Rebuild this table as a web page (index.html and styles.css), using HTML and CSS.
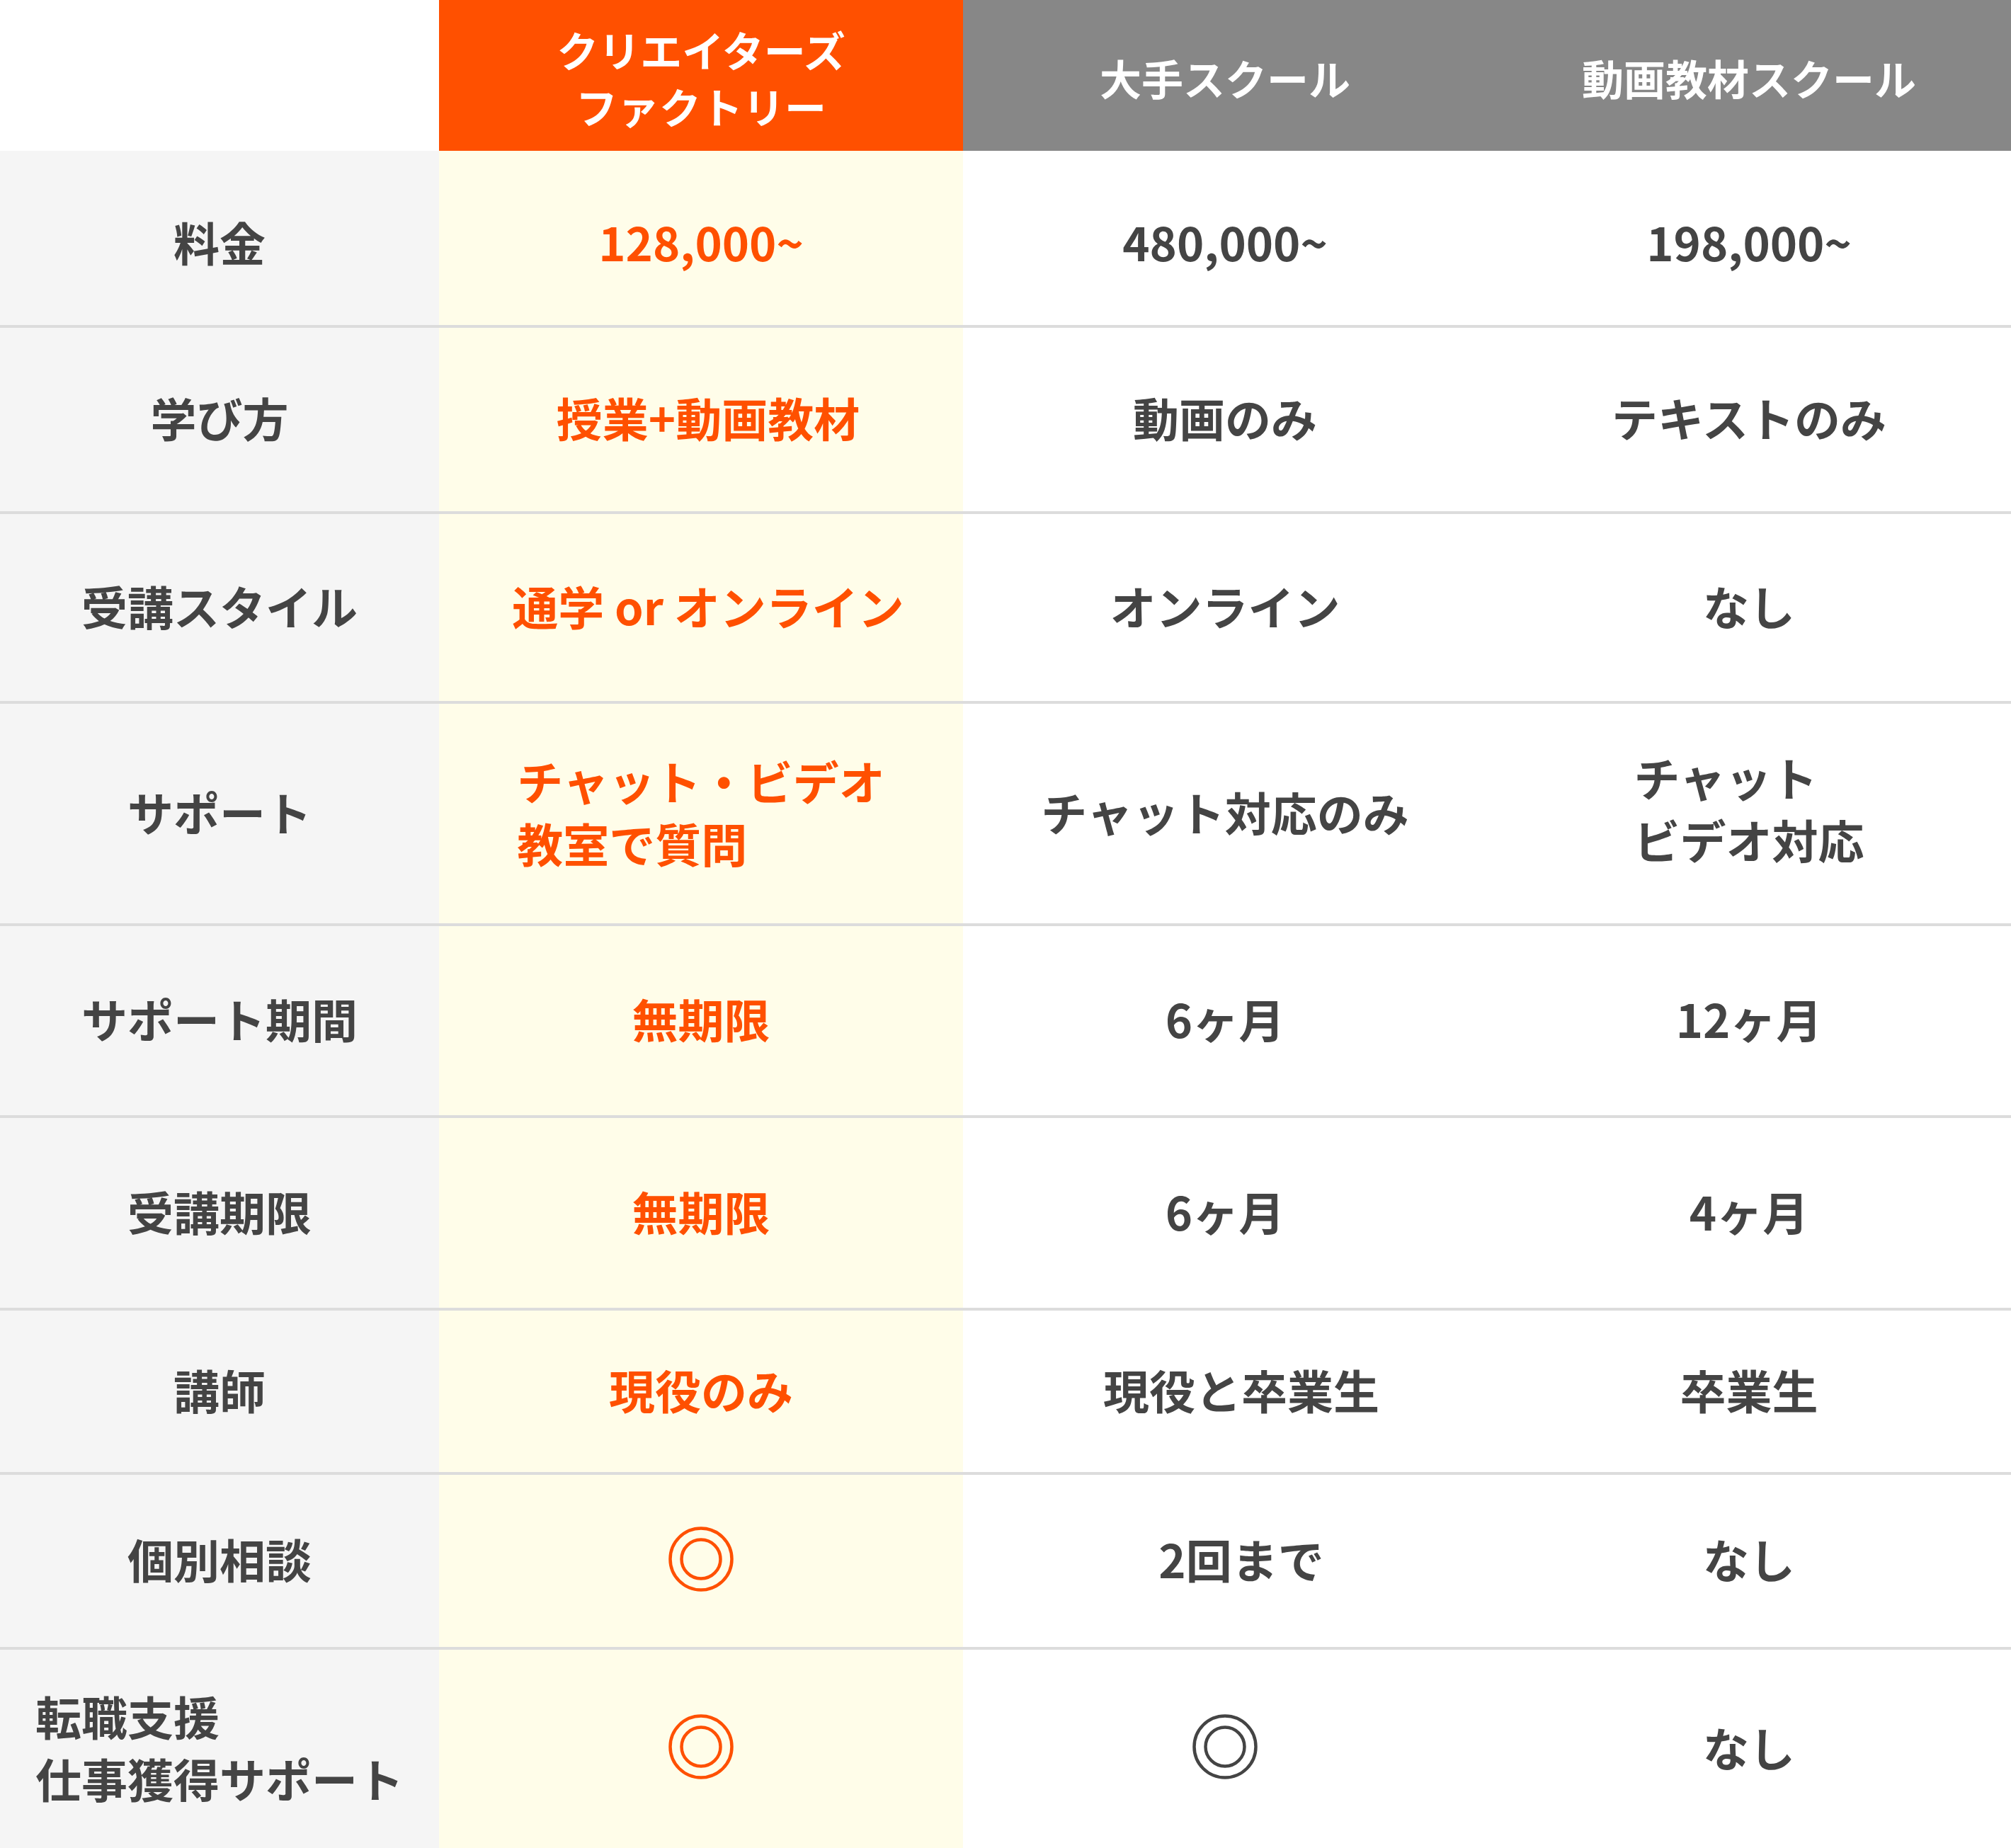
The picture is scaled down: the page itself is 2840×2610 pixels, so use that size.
FILE: index.html
```html
<!DOCTYPE html>
<html lang="ja">
<head>
<meta charset="utf-8">
<title>比較表</title>
<link rel="stylesheet" href="styles.css">
</head>
<body>
<div class="compare">
  <div class="row head">
    <div class="cell c1"></div>
    <div class="cell c2 th-main"><span class="block center">クリエイターズ<br>ファクトリー</span></div>
    <div class="cell c3 th-sub">大手スクール</div>
    <div class="cell c4 th-sub">動画教材スクール</div>
  </div>
  <div class="row r1">
    <div class="cell c1">料金</div>
    <div class="cell c2 hl">128,000~</div>
    <div class="cell c3">480,000~</div>
    <div class="cell c4">198,000~</div>
  </div>
  <div class="row r2">
    <div class="cell c1">学び方</div>
    <div class="cell c2 hl shift-s">授業+動画教材</div>
    <div class="cell c3">動画のみ</div>
    <div class="cell c4">テキストのみ</div>
  </div>
  <div class="row r3">
    <div class="cell c1">受講スタイル</div>
    <div class="cell c2 hl shift-s">通学 or オンライン</div>
    <div class="cell c3">オンライン</div>
    <div class="cell c4">なし</div>
  </div>
  <div class="row r4">
    <div class="cell c1">サポート</div>
    <div class="cell c2 hl"><span class="block">チャット・ビデオ<br>教室で質問</span></div>
    <div class="cell c3">チャット対応のみ</div>
    <div class="cell c4"><span class="block raise">チャット<br>ビデオ対応</span></div>
  </div>
  <div class="row r5">
    <div class="cell c1">サポート期間</div>
    <div class="cell c2 hl">無期限</div>
    <div class="cell c3">6ヶ月</div>
    <div class="cell c4">12ヶ月</div>
  </div>
  <div class="row r6">
    <div class="cell c1">受講期限</div>
    <div class="cell c2 hl">無期限</div>
    <div class="cell c3">6ヶ月</div>
    <div class="cell c4">4ヶ月</div>
  </div>
  <div class="row r7">
    <div class="cell c1">講師</div>
    <div class="cell c2 hl">現役のみ</div>
    <div class="cell c3 shift-l">現役と卒業生</div>
    <div class="cell c4">卒業生</div>
  </div>
  <div class="row r8">
    <div class="cell c1">個別相談</div>
    <div class="cell c2 hl">
      <svg class="dbl" viewBox="0 0 92 92" aria-label="◎"><circle cx="46" cy="46" r="43.5"/><circle cx="46" cy="46" r="27.5"/></svg>
    </div>
    <div class="cell c3 shift-l">2回まで</div>
    <div class="cell c4">なし</div>
  </div>
  <div class="row r9 last">
    <div class="cell c1"><span class="block">転職支援<br>仕事獲得サポート</span></div>
    <div class="cell c2 hl">
      <svg class="dbl" viewBox="0 0 92 92" aria-label="◎"><circle cx="46" cy="46" r="43.5"/><circle cx="46" cy="46" r="27.5"/></svg>
    </div>
    <div class="cell c3">
      <svg class="dbl gray" viewBox="0 0 92 92" aria-label="◎"><circle cx="46" cy="46" r="43.5"/><circle cx="46" cy="46" r="27.5"/></svg>
    </div>
    <div class="cell c4">なし</div>
  </div>
</div>
</body>
</html>
```

FILE: styles.css
```css
html, body {
  margin: 0;
  padding: 0;
  background: #ffffff;
}

body {
  font-family: "Noto Sans CJK JP", "Noto Sans", sans-serif;
  font-weight: 700;
  color: #444444;
  font-size: 65px;
}

.compare {
  width: 2840px;
  display: flex;
  flex-direction: column;
}

.row {
  display: grid;
  grid-template-columns: 620px 740px 740px 740px;
}

.cell {
  display: flex;
  align-items: center;
  justify-content: center;
  box-sizing: border-box;
  border-bottom: 4px solid #dcdcdc;
  line-height: 1.36;
  white-space: nowrap;
  padding-bottom: 6px;
}

.c1 { background: #f5f5f5; }
.c2 { background: #fffde9; }
.c3, .c4 { background: #ffffff; }

.hl { color: #ff5000; }

.block {
  display: block;
  text-align: left;
}
.block.center { text-align: center; }
.block.raise { margin-bottom: 10px; }

.head { height: 213px; }
.head .cell {
  border-bottom: none;
  color: #ffffff;
  font-size: 59px;
  line-height: 1.36;
  padding-top: 7px;
  padding-bottom: 0;
}
.head .c1 { background: #ffffff; }
.head .th-main { background: #ff5000; }
.head .th-sub { background: #878787; }

.r1 { height: 250px; }
.r1 .cell { padding-top: 16px; }
.r2 { height: 263px; }
.r3 { height: 268px; }
.r4 { height: 314px; }
.r5 { height: 271px; }
.r6 { height: 272px; }
.r7 { height: 232px; }
.r8 { height: 247px; }
.r9 { height: 280px; }
.last .cell { border-bottom: none; }

.shift-s { padding-left: 20px; }
.shift-l { padding-left: 46px; }

.dbl {
  width: 92px;
  height: 92px;
  fill: none;
  stroke: #ff5000;
  stroke-width: 4.5;
}
.dbl.gray { stroke: #444444; }
```
